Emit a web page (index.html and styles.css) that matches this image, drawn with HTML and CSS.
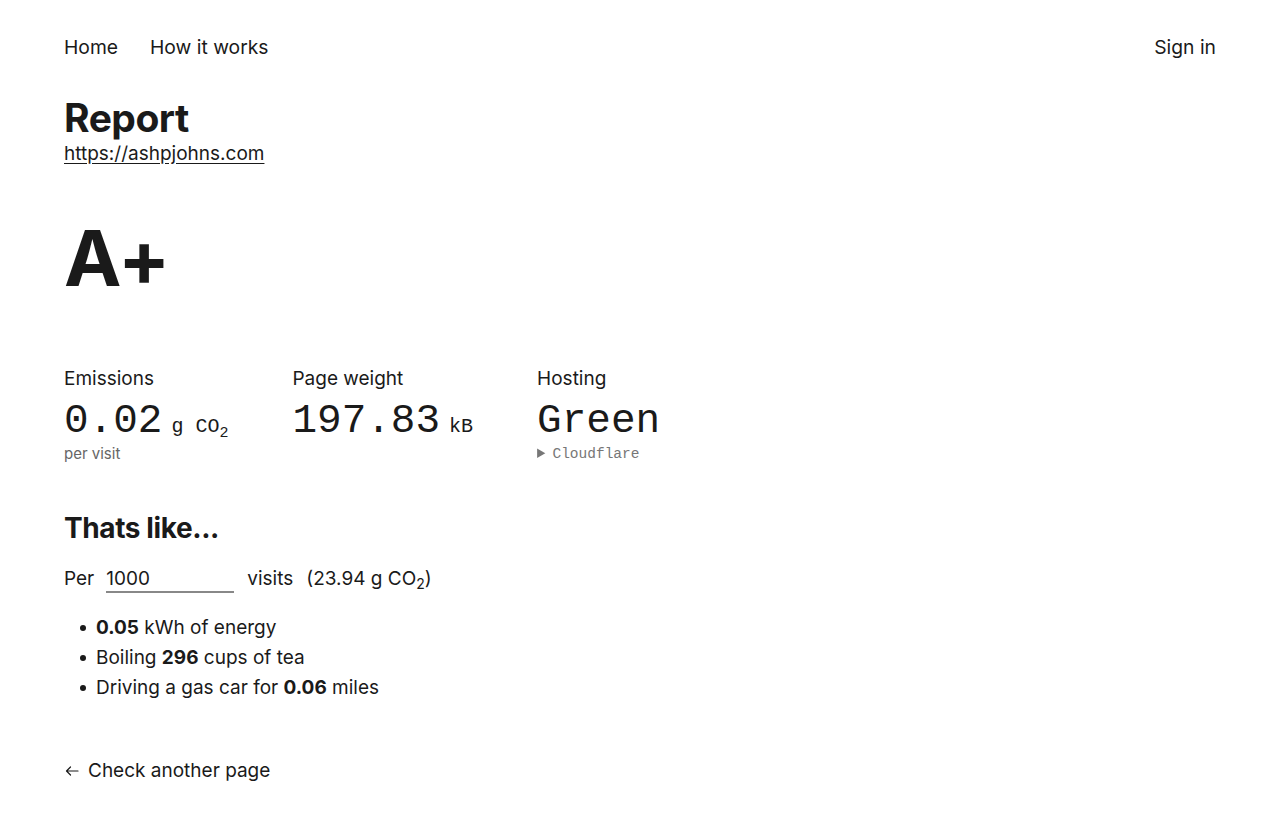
FILE: index.html
```html
<!DOCTYPE html>
<html lang="en">
<head>
<meta charset="utf-8">
<title>Report</title>
<link rel="stylesheet" href="styles.css">
</head>
<body>
<header class="site-header">
  <nav class="nav">
    <a href="#" class="nav-link">Home</a>
    <a href="#" class="nav-link">How it works</a>
  </nav>
  <a href="#" class="nav-link">Sign in</a>
</header>
<main class="main">
  <section class="title-block">
    <h1 class="title">Report</h1>
    <a href="#" class="url">https://ashpjohns.com</a>
  </section>
  <div class="grade">A+</div>
  <section class="metrics">
    <div class="metric">
      <div class="metric-label">Emissions</div>
      <div class="metric-value">0.02<span class="unit">g CO<sub>2</sub></span></div>
      <div class="metric-note">per visit</div>
    </div>
    <div class="metric">
      <div class="metric-label">Page weight</div>
      <div class="metric-value">197.83<span class="unit">kB</span></div>
    </div>
    <div class="metric">
      <div class="metric-label">Hosting</div>
      <div class="metric-value">Green</div>
      <details class="host"><summary>Cloudflare</summary></details>
    </div>
  </section>
  <section class="like">
    <h2 class="like-title">Thats like...</h2>
    <div class="per-row">
      <span>Per</span>
      <input class="visits-input" type="text" value="1000">
      <span>visits</span>
      <span class="total">(23.94 g CO<sub>2</sub>)</span>
    </div>
    <ul class="like-list">
      <li><b>0.05</b> kWh of energy</li>
      <li>Boiling <b>296</b> cups of tea</li>
      <li>Driving a gas car for <b>0.06</b> miles</li>
    </ul>
  </section>
  <a href="#" class="back"><svg class="back-icon" width="16" height="16" viewBox="0 0 16 16" fill="none" stroke="#1a1a1a" stroke-width="1.2" stroke-linecap="round" stroke-linejoin="round"><path d="M14 8H2.5M6.5 4L2.5 8l4 4"/></svg>Check another page</a>
</main>
</body>
</html>
```

FILE: styles.css
```css
* { box-sizing: border-box; }
html, body { margin: 0; padding: 0; background: #fff; }
body {
  font-family: Inter, "Noto Sans", sans-serif;
  color: #1a1a1a;
  padding: 0 64px;
}
a { color: inherit; text-decoration: none; }
.site-header {
  height: 94px;
  display: flex;
  align-items: center;
  justify-content: space-between;
}
.nav { display: flex; gap: 32px; }
.nav-link { font-size: 19.3px; }
.title-block { display: flex; flex-direction: column; }
.title {
  margin: 0;
  font-size: 39px;
  font-weight: 700;
  line-height: 48px;
  letter-spacing: -0.5px;
}
.url {
  font-size: 19px;
  line-height: 24px;
  text-decoration: underline;
  text-underline-offset: 3px;
  align-self: flex-start;
}
.grade {
  margin-top: 52px;
  font-size: 77px;
  font-weight: 700;
  line-height: 80px;
  letter-spacing: -1px;
}
.metrics {
  margin-top: 69px;
  display: flex;
  gap: 64px;
}
.metric { display: flex; flex-direction: column; }
.metric-label { font-size: 19px; line-height: 24px; }
.metric-value {
  font-family: "Liberation Mono", "DejaVu Sans Mono", monospace;
  font-size: 41px;
  line-height: 48px;
  height: 48px;
  margin-top: 6px;
}
.unit {
  font-size: 20px;
  line-height: 1;
  margin-left: 9px;
}
.unit sub {
  font-size: 15px;
  line-height: 1;
  vertical-align: baseline;
  position: relative;
  top: 5px;
}
.metric-note { font-size: 15px; color: #666; line-height: 18px; }
.host { font-family: "Liberation Mono", monospace; font-size: 14.5px; color: #777; line-height: 18px; }
.host summary { cursor: pointer; }
.like { margin-top: 47px; }
.like-title {
  margin: 0;
  font-size: 28px;
  font-weight: 700;
  line-height: 36px;
  letter-spacing: -0.4px;
}
.per-row {
  margin-top: 18px;
  display: flex;
  align-items: center;
  font-size: 19px;
  line-height: 30px;
  gap: 13px;
}
.visits-input {
  width: 128px;
  height: 26px;
  font: inherit;
  line-height: 24px;
  color: inherit;
  border: none;
  border-bottom: 2px solid #888;
  padding: 0;
  outline: none;
  margin-left: -1px;
  margin-top: 1px;
}
.total sub {
  font-size: 14px;
  line-height: 1;
  vertical-align: baseline;
  position: relative;
  top: 4px;
}
.like-list {
  margin: 19px 0 0;
  padding-left: 16px;
  list-style: none;
  font-size: 19px;
  line-height: 30px;
}
.like-list li::before {
  content: "";
  display: inline-block;
  width: 6px;
  height: 6px;
  border-radius: 50%;
  background: #1a1a1a;
  margin-right: 10px;
  vertical-align: 3px;
}
.like-list b { font-weight: 700; }
.back {
  margin-top: 56px;
  display: inline-flex;
  align-items: center;
  gap: 8px;
  font-size: 19px;
}
.back-icon { flex: none; }
```
